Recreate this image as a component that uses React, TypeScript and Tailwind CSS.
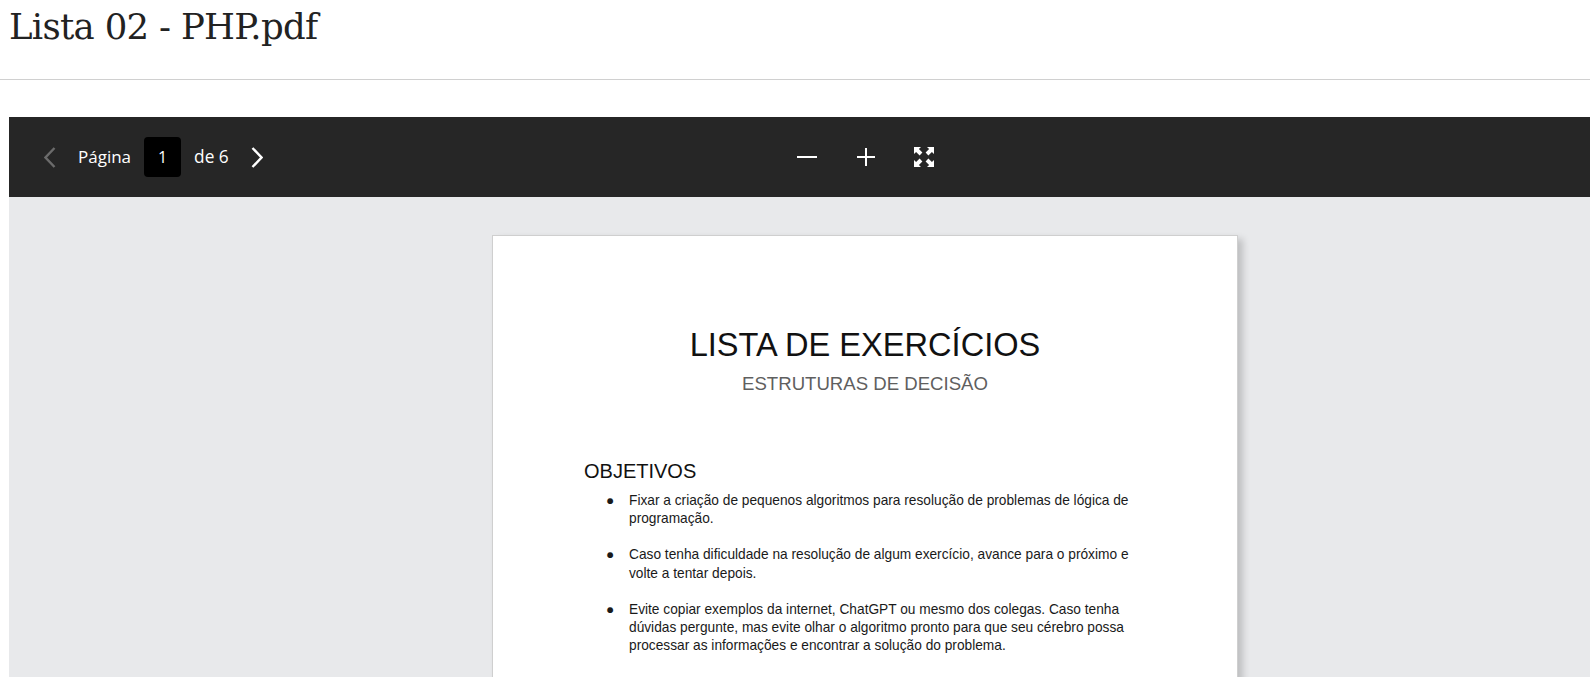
import React from "react";

const Arrow = () => (
  <path d="M0 0 L7 0 L4.9 2.1 L8.4 5.6 L5.6 8.4 L2.1 4.9 L0 7 Z" fill="white" />
);

const FullscreenIcon = () => (
  <svg width="20" height="20" viewBox="0 0 20 20">
    <Arrow />
    <g transform="translate(20,0) scale(-1,1)">
      <Arrow />
    </g>
    <g transform="translate(0,20) scale(1,-1)">
      <Arrow />
    </g>
    <g transform="translate(20,20) scale(-1,-1)">
      <Arrow />
    </g>
  </svg>
);

const Chevron = ({ dir, color }: { dir: "left" | "right"; color: string }) => (
  <svg width="12" height="21" viewBox="0 0 12 21">
    <polyline
      points={dir === "left" ? "10.5,1 1.5,10.5 10.5,20" : "1.5,1 10.5,10.5 1.5,20"}
      fill="none"
      stroke={color}
      strokeWidth="2.4"
      strokeLinecap="butt"
      strokeLinejoin="miter"
    />
  </svg>
);

export default function App() {
  return (
    <div className="w-[1590px] h-[677px] overflow-hidden bg-white">
      <header className="h-[80px] border-b border-[#d0d0d0] pl-[9px]">
        <h1 className="pt-[3px] text-[35.5px] tracking-[-0.7px] leading-[48px] text-[#222] font-['DejaVu_Serif',serif]">
          Lista 02 - PHP.pdf
        </h1>
      </header>
      <div className="pt-[37px] pl-[9px]">
        <div className="w-[1712px]">
          <div className="h-[80px] bg-[#262626] grid grid-cols-[1fr_auto_1fr] items-center font-['Open_Sans',sans-serif] text-white">
            <div className="flex items-center pl-[35px]">
              <Chevron dir="left" color="#6b6b6b" />
              <span className="ml-[22px] text-[17px] leading-[24px]">Página</span>
              <div className="ml-[13px] w-[37px] h-[40px] rounded-[4px] bg-black flex items-center justify-center text-[16px]">
                1
              </div>
              <span className="ml-[13px] text-[17.3px] leading-[24px]">de 6</span>
              <span className="ml-[22px] flex">
                <Chevron dir="right" color="#ffffff" />
              </span>
            </div>
            <div className="flex items-center">
              <div className="w-[20px] h-[2px] bg-white" />
              <svg className="ml-[40px]" width="18" height="18" viewBox="0 0 18 18">
                <rect x="0" y="8" width="18" height="2" fill="white" />
                <rect x="8" y="0" width="2" height="18" fill="white" />
              </svg>
              <span className="ml-[39px] flex">
                <FullscreenIcon />
              </span>
            </div>
            <div />
          </div>
          <div className="bg-[#e8e9eb] pt-[38px] h-[480px] flex justify-center">
            <div className="w-[746px] h-[600px] bg-white border border-[#cfcfcf] shadow-[5px_4px_7px_rgba(0,0,0,0.18)] font-['Liberation_Sans',Arial,sans-serif]">
              <div className="pt-[89px] text-center">
                <div className="text-[32.6px] leading-[40px] text-[#111]">LISTA DE EXERCÍCIOS</div>
                <div className="mt-[7px] text-[18.6px] leading-[24px] text-[#5f5f5f]">ESTRUTURAS DE DECISÃO</div>
              </div>
              <div className="pl-[91px] mt-[63px]">
                <div className="text-[20px] leading-[24px] text-[#111]">OBJETIVOS</div>
                <ul className="mt-[9px] text-[13.72px] leading-[18.2px] text-[#1a1a1a] flex flex-col gap-[18px]">
                  <li className="flex">
                    <span className="w-[45px] pl-[22px] shrink-0">●</span>
                    <span className="whitespace-nowrap">
                      Fixar a criação de pequenos algoritmos para resolução de problemas de lógica de
                      <br />
                      programação.
                    </span>
                  </li>
                  <li className="flex">
                    <span className="w-[45px] pl-[22px] shrink-0">●</span>
                    <span className="whitespace-nowrap">
                      Caso tenha dificuldade na resolução de algum exercício, avance para o próximo e
                      <br />
                      volte a tentar depois.
                    </span>
                  </li>
                  <li className="flex">
                    <span className="w-[45px] pl-[22px] shrink-0">●</span>
                    <span className="whitespace-nowrap">
                      Evite copiar exemplos da internet, ChatGPT ou mesmo dos colegas. Caso tenha
                      <br />
                      dúvidas pergunte, mas evite olhar o algoritmo pronto para que seu cérebro possa
                      <br />
                      processar as informações e encontrar a solução do problema.
                    </span>
                  </li>
                </ul>
              </div>
            </div>
          </div>
        </div>
      </div>
    </div>
  );
}
